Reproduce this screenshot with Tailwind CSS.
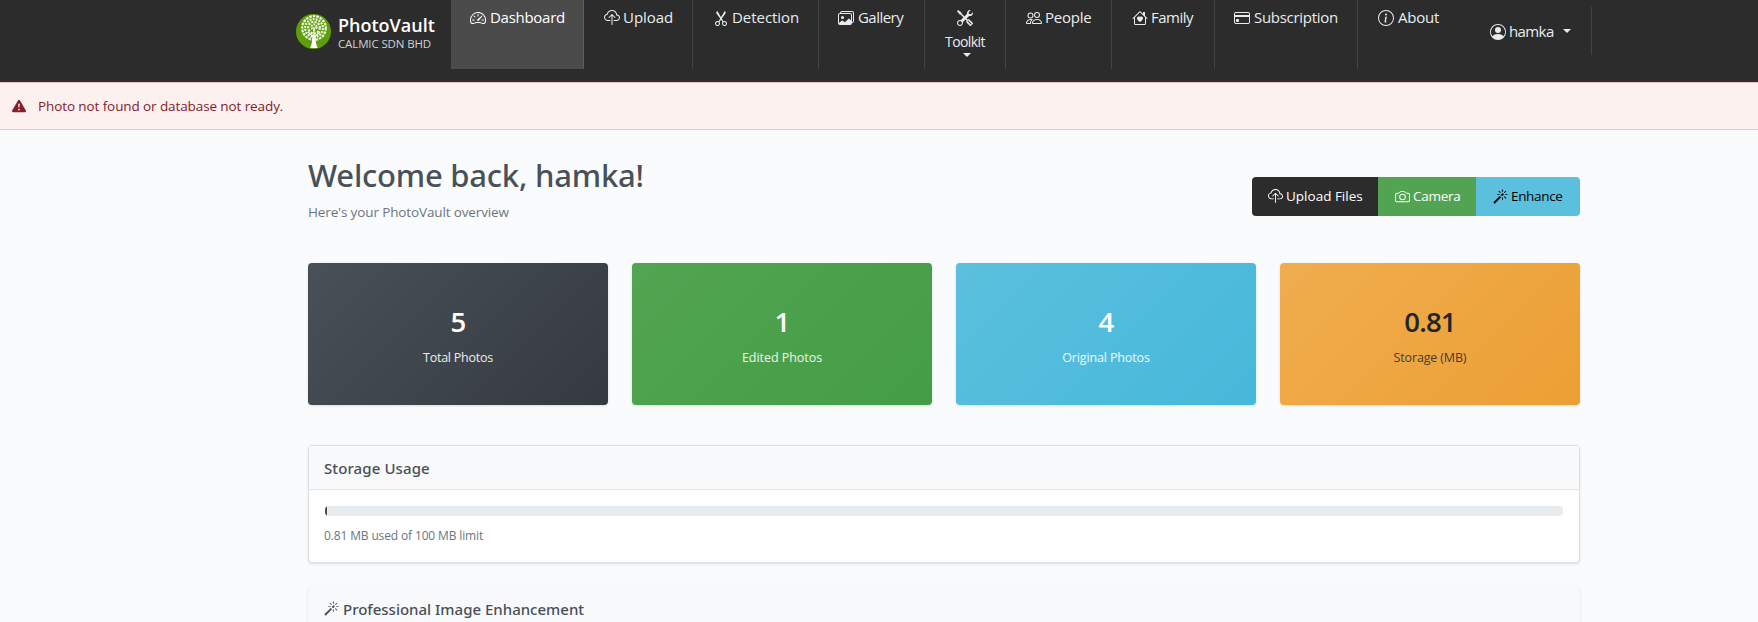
<!DOCTYPE html>
<html lang="en">
<head>
<meta charset="utf-8">
<title>PhotoVault</title>
<script src="https://cdn.jsdelivr.net/npm/@tailwindcss/browser@4"></script>
</head>
<body class="h-[622px] overflow-hidden bg-[#fafbfd] font-['Open_Sans','Noto_Sans',sans-serif] text-[#495057]">
<svg class="hidden">
  <symbol id="cloud" viewBox="0 0 16 16"><path fill-rule="evenodd" d="M4.406 1.342A5.53 5.53 0 0 1 8 0c2.69 0 4.923 2 5.166 4.579C14.758 4.804 16 6.137 16 7.773 16 9.569 14.502 11 12.687 11H10a.5.5 0 0 1 0-1h2.688C13.979 10 15 8.988 15 7.773c0-1.216-1.02-2.228-2.313-2.228h-.5v-.5C12.188 2.825 10.328 1 8 1a4.53 4.53 0 0 0-2.941 1.1c-.757.652-1.153 1.438-1.153 2.055v.448l-.445.049C2.064 4.805 1 5.952 1 7.318 1 8.785 2.23 10 3.781 10H6a.5.5 0 0 1 0 1H3.781C1.708 11 0 9.366 0 7.318c0-1.763 1.266-3.223 2.942-3.593.143-.863.698-1.723 1.464-2.383"/><path fill-rule="evenodd" d="M7.646 4.146a.5.5 0 0 1 .708 0l3 3a.5.5 0 0 1-.708.708L8.5 5.707V14.5a.5.5 0 0 1-1 0V5.707L5.354 7.854a.5.5 0 1 1-.708-.708z"/></symbol>
  <symbol id="magic" viewBox="0 0 16 16"><path d="M9.5 2.672a.5.5 0 1 0 1 0V.843a.5.5 0 0 0-1 0zm4.5.035A.5.5 0 0 0 13.293 2L12 3.293a.5.5 0 1 0 .707.707zM7.293 4A.5.5 0 1 0 8 3.293L6.707 2A.5.5 0 0 0 6 2.707zm-.621 2.5a.5.5 0 1 0 0-1H4.843a.5.5 0 1 0 0 1zm8.485 0a.5.5 0 1 0 0-1h-1.829a.5.5 0 0 0 0 1zM13.293 10A.5.5 0 1 0 14 9.293L12.707 8a.5.5 0 1 0-.707.707zM9.5 11.157a.5.5 0 0 0 1 0V9.328a.5.5 0 0 0-1 0zm1.854-5.097a.5.5 0 0 0 0-.706l-.708-.708a.5.5 0 0 0-.707 0L8.646 5.94a.5.5 0 0 0 0 .707l.708.708a.5.5 0 0 0 .707 0l1.293-1.293Zm-3 3a.5.5 0 0 0 0-.706l-.708-.708a.5.5 0 0 0-.707 0L.646 13.94a.5.5 0 0 0 0 .707l.707.707a.5.5 0 0 0 .707 0z"/></symbol>
</svg>

<header class="flex h-[82px] items-start bg-[#2c2c2c] pl-[296px] text-[15px] leading-6 text-[#e9ecef]">
  <a class="flex w-[155px] shrink-0 gap-[7px] pt-3.5">
    <svg class="size-[35px] shrink-0" viewBox="0 0 35 35">
      <circle cx="17.5" cy="17.5" r="17.5" fill="#5f9e0b"/>
      <g fill="none" stroke="#eef4e4">
        <circle cx="18" cy="14" r="11.8" stroke-width="2.2" stroke-dasharray="2.6 1"/>
        <circle cx="18" cy="14" r="8.9" stroke-width="2.2" stroke-dasharray="2 1.1"/>
        <circle cx="18" cy="13.6" r="5.8" stroke-width="2.3" stroke-dasharray="2.2 1.2"/>
        <circle cx="18" cy="13" r="2.5" stroke-width="2.2" stroke-dasharray="1.7 1"/>
        <path d="M18 23V13M18 23l-6-5M18 23l6-5" stroke-width="1.5"/>
      </g>
      <path fill="#fff" d="M16.300 21h3.400c-.3 4 0 9.500 2 13h-7.600c2-3.500 2.500-9 2.200-13"/>
    </svg>
    <span class="flex flex-col">
      <span class="text-lg leading-[22px] font-semibold text-white">PhotoVault</span>
      <span class="text-[11.5px] leading-[15px] tracking-[-0.13px] whitespace-nowrap text-[#d0d2d4]">CALMIC SDN BHD</span>
    </span>
  </a>
  <nav class="flex h-[69px]">
    <a class="flex w-[133px] gap-1 border-r border-[#5e5e5e] bg-[#4b4b4b] pt-[5px] pl-[19px] text-white">
      <svg class="mt-[5px] size-4 shrink-0 fill-current" viewBox="0 0 16 16"><path d="M8 4a.5.5 0 0 1 .5.5V6a.5.5 0 0 1-1 0V4.500A.5.5 0 0 1 8 4M3.732 5.732a.5.5 0 0 1 .707 0l.915.914a.5.5 0 1 1-.708.708l-.914-.915a.5.5 0 0 1 0-.707M2 10a.5.5 0 0 1 .5-.5h1.586a.5.5 0 0 1 0 1H2.500A.5.5 0 0 1 2 10m9.500 0a.5.5 0 0 1 .5-.5h1.500a.5.5 0 0 1 0 1H12a.5.5 0 0 1-.5-.5m.754-4.246a.39.39 0 0 0-.527-.02L7.547 9.310a.91.91 0 1 0 1.302 1.258l3.434-4.297a.39.39 0 0 0-.029-.518z"/><path fill-rule="evenodd" d="M0 10a8 8 0 1 1 15.547 2.661c-.442 1.253-1.845 1.602-2.932 1.250C11.309 13.488 9.475 13 8 13c-1.474 0-3.310.488-4.615.911-1.087.352-2.490.003-2.932-1.250A8 8 0 0 1 0 10m8-7a7 7 0 0 0-6.603 9.329c.203.575.923.876 1.680.63C4.397 12.533 6.358 12 8 12s3.604.532 4.923.96c.757.245 1.477-.056 1.680-.631A7 7 0 0 0 8 3"/></svg>
      <span class="tracking-[-0.28px]">Dashboard</span>
    </a>
    <a class="flex w-[109px] gap-[3px] border-r border-[#434343] pt-[5px] pl-5">
      <svg class="mt-[5px] size-4 shrink-0 fill-current"><use href="#cloud"/></svg>
      <span class="tracking-[-0.05px]">Upload</span>
    </a>
    <a class="flex w-[126px] gap-[3px] border-r border-[#434343] pt-[5px] pl-5">
      <svg class="mt-[5px] size-4 shrink-0 fill-current" viewBox="0 0 16 16"><path d="M3.500 3.500c-.614-.884-.074-1.962.858-2.500L8 7.226 11.642 1c.932.538 1.472 1.616.858 2.500L8.810 8.610l1.556 2.661a2.500 2.500 0 1 1-.794.637L8 9.730l-1.572 2.177a2.500 2.500 0 1 1-.794-.637L7.190 8.610zm2.500 10a1.500 1.500 0 1 0-3 0 1.500 1.500 0 0 0 3 0m7 0a1.500 1.500 0 1 0-3 0 1.500 1.500 0 0 0 3 0"/></svg>
      <span class="tracking-[-0.05px]">Detection</span>
    </a>
    <a class="flex w-[106px] gap-1 border-r border-[#434343] pt-[5px] pl-[19px]">
      <svg class="mt-[5px] size-4 shrink-0 fill-current" viewBox="0 0 16 16"><path d="M4.502 9a1.500 1.500 0 1 0 0-3 1.500 1.500 0 0 0 0 3"/><path d="M14.002 13a2 2 0 0 1-2 2h-10a2 2 0 0 1-2-2V5A2 2 0 0 1 2 3a2 2 0 0 1 2-2h10a2 2 0 0 1 2 2v8a2 2 0 0 1-1.998 2M14 2H4a1 1 0 0 0-1 1h9.002a2 2 0 0 1 2 2v7A1 1 0 0 0 15 11V3a1 1 0 0 0-1-1M2.002 4a1 1 0 0 0-1 1v8l2.646-2.354a.5.5 0 0 1 .63-.062l2.660 1.773 3.710-3.710a.5.5 0 0 1 .577-.094l1.777 1.947V5a1 1 0 0 0-1-1z"/></svg>
      <span class="tracking-[-0.54px]">Gallery</span>
    </a>
    <a class="flex w-[81px] flex-col items-center border-r border-[#434343] pt-2.5">
      <svg class="size-4 shrink-0 fill-current" viewBox="0 0 16 16"><path fill-rule="evenodd" d="M1 0 0 1l2.200 3.081a1 1 0 0 0 .815.419h.07a1 1 0 0 1 .708.293l2.675 2.675-2.617 2.654A3.003 3.003 0 0 0 0 13a3 3 0 1 0 5.878-.851l2.654-2.617.968.968-.305.914a1 1 0 0 0 .242 1.023l3.270 3.270a.997.997 0 0 0 1.414 0l1.586-1.586a.997.997 0 0 0 0-1.414l-3.270-3.270a1 1 0 0 0-1.023-.242L10.500 9.500l-.96-.96 2.680-2.643A3.005 3.005 0 0 0 16 3q0-.405-.102-.777l-2.140 2.141L12 4l-.364-1.757L13.777.102a3 3 0 0 0-3.675 3.680L7.462 6.460 4.793 3.793a1 1 0 0 1-.293-.707v-.071a1 1 0 0 0-.419-.814zm9.646 10.646a.5.5 0 0 1 .708 0l2.914 2.915a.5.5 0 0 1-.707.707l-2.915-2.914a.5.5 0 0 1 0-.708M3 11l.471.242.529.026.287.445.445.287.026.529L5 13l-.242.471-.026.529-.445.287-.287.445-.529.026L3 15l-.471-.242L2 14.732l-.287-.445L1.268 14l-.026-.529L1 13l.242-.471.026-.529.445-.287.287-.445.529-.026z"/></svg>
      <span class="mt-1 h-[23px] text-sm leading-6 tracking-[-0.6px]">Toolkit</span>
      <span class="ml-1 border-x-4 border-t-4 border-x-transparent border-t-current"></span>
    </a>
    <a class="flex w-[106px] gap-[3px] border-r border-[#434343] pt-[5px] pl-5">
      <svg class="mt-[5px] size-4 shrink-0 fill-current" viewBox="0 0 16 16"><path d="M15 14s1 0 1-1-1-4-5-4-5 3-5 4 1 1 1 1zm-7.978-1L7 12.996c.001-.264.167-1.030.76-1.720C8.312 10.629 9.282 10 11 10c1.717 0 2.687.63 3.240 1.276.593.69.758 1.457.76 1.720l-.008.002-.014.002zM11 7a2 2 0 1 0 0-4 2 2 0 0 0 0 4m3-2a3 3 0 1 1-6 0 3 3 0 0 1 6 0M6.936 9.280a6 6 0 0 0-1.230-.247A7 7 0 0 0 5 9c-4 0-5 3-5 4q0 1 1 1h4.216A2.240 2.240 0 0 1 5 13c0-1.010.377-2.042 1.090-2.904.243-.294.526-.569.846-.816M4.920 10A5.500 5.500 0 0 0 4 13H1c0-.26.164-1.030.76-1.724.545-.636 1.492-1.256 3.160-1.275ZM1.500 5.500a3 3 0 1 1 6 0 3 3 0 0 1-6 0m3-2a2 2 0 1 0 0 4 2 2 0 0 0 0-4"/></svg>
      <span class="tracking-[-0.24px]">People</span>
    </a>
    <a class="flex w-[103px] gap-[3px] border-r border-[#434343] pt-[5px] pl-5">
      <svg class="mt-[5px] size-4 shrink-0 fill-current" viewBox="0 0 16 16"><path d="M8 6.982C9.664 5.309 13.825 8.236 8 12 2.175 8.236 6.336 5.309 8 6.982"/><path d="M8.707 1.500a1 1 0 0 0-1.414 0L.646 8.146a.5.5 0 0 0 .708.707L2 8.207V13.500A1.500 1.500 0 0 0 3.500 15h9a1.500 1.500 0 0 0 1.500-1.500V8.207l.646.646a.5.5 0 0 0 .708-.707L13 5.793V2.500a.5.5 0 0 0-.5-.5h-1a.5.5 0 0 0-.5.5v1.293zM13 7.207V13.500a.5.5 0 0 1-.5.5h-9a.5.5 0 0 1-.5-.5V7.207l5-5z"/></svg>
      <span class="tracking-[-0.51px]">Family</span>
    </a>
    <a class="flex w-[143px] gap-1 border-r border-[#434343] pt-[5px] pl-[19px]">
      <svg class="mt-[5px] size-4 shrink-0 fill-current" viewBox="0 0 16 16"><path d="M0 4a2 2 0 0 1 2-2h12a2 2 0 0 1 2 2v8a2 2 0 0 1-2 2H2a2 2 0 0 1-2-2zm2-1a1 1 0 0 0-1 1v1h14V4a1 1 0 0 0-1-1zm13 4H1v5a1 1 0 0 0 1 1h12a1 1 0 0 0 1-1z"/><path d="M2 10a1 1 0 0 1 1-1h1a1 1 0 0 1 1 1v1a1 1 0 0 1-1 1H3a1 1 0 0 1-1-1z"/></svg>
      <span class="tracking-[-0.29px]">Subscription</span>
    </a>
    <a class="flex w-[101px] gap-1 pt-[5px] pl-5">
      <svg class="mt-[5px] size-4 shrink-0 fill-current" viewBox="0 0 16 16"><path d="M8 15A7 7 0 1 1 8 1a7 7 0 0 1 0 14m0 1A8 8 0 1 0 8 0a8 8 0 0 0 0 16"/><path d="m8.930 6.588-2.290.287-.082.38.45.083c.294.07.352.176.288.469l-.738 3.468c-.194.897.105 1.319.808 1.319.545 0 1.178-.252 1.465-.598l.088-.416c-.2.176-.492.246-.686.246-.275 0-.375-.193-.304-.533zM9 4.500a1 1 0 1 1-2 0 1 1 0 0 1 2 0"/></svg>
      <span class="tracking-[-0.22px]">About</span>
    </a>
  </nav>
  <a class="mt-[7px] ml-[11px] flex h-12 w-[122px] gap-[3px] border-r border-[#434343] pt-3 pl-5">
    <svg class="mt-[5px] size-4 shrink-0 fill-current" viewBox="0 0 16 16"><path d="M11 6a3 3 0 1 1-6 0 3 3 0 0 1 6 0"/><path fill-rule="evenodd" d="M0 8a8 8 0 1 1 16 0A8 8 0 0 1 0 8m8-7a7 7 0 0 0-5.468 11.370C3.242 11.226 4.805 10 8 10s4.757 1.225 5.468 2.370A7 7 0 0 0 8 1"/></svg>
    <span class="tracking-[-0.6px]">hamka</span>
    <span class="mt-2.5 ml-1.5 h-1 border-x-4 border-t-4 border-x-transparent border-t-current"></span>
  </a>
</header>

<div class="flex h-12 items-center gap-3 border-y border-[#f5c2c7] bg-[#fdf1f0] pl-3 text-[13.5px] text-[#842029]">
  <svg class="size-3.5 fill-current" viewBox="0 0 16 16"><path d="M8.982 1.566a1.130 1.130 0 0 0-1.960 0L.165 13.233c-.457.778.091 1.767.98 1.767h13.713c.889 0 1.438-.99.98-1.767zM8 5c.535 0 .954.462.9.995l-.35 3.507a.552.552 0 0 1-1.100 0L7.100 5.995A.905.905 0 0 1 8 5m.002 6a1 1 0 1 1 0 2 1 1 0 0 1 0-2"/></svg>
  <span class="tracking-[-0.1px]">Photo not found or database not ready.</span>
</div>

<main class="ml-[308px] w-[1272px] whitespace-nowrap">
  <div class="flex h-[133px] justify-between">
    <div>
      <h1 class="pt-[25px] font-['Noto_Sans',sans-serif] text-[31px] leading-10 font-medium tracking-[-0.22px]">Welcome back, hamka!</h1>
      <p class="pt-[7px] text-[13.5px] leading-5 tracking-[-0.13px] text-[#6c757d]">Here's your PhotoVault overview</p>
    </div>
    <div class="mt-[47px] flex h-[39px] overflow-hidden rounded text-[13.5px] leading-[39px] text-white">
      <a class="flex w-[126px] gap-[3px] bg-[#2c2c2c] pl-4"><svg class="mt-3 size-[15px] fill-current"><use href="#cloud"/></svg><span>Upload Files</span></a>
      <a class="flex w-[98px] gap-[3px] bg-[#52a452] pl-[17px]"><svg class="mt-3 size-[15px] fill-current" viewBox="0 0 16 16"><path d="M15 12a1 1 0 0 1-1 1H2a1 1 0 0 1-1-1V6a1 1 0 0 1 1-1h1.172a3 3 0 0 0 2.120-.879l.83-.828A1 1 0 0 1 6.827 3h2.344a1 1 0 0 1 .707.293l.828.828A3 3 0 0 0 12.828 5H14a1 1 0 0 1 1 1zM2 4a2 2 0 0 0-2 2v6a2 2 0 0 0 2 2h12a2 2 0 0 0 2-2V6a2 2 0 0 0-2-2h-1.172a2 2 0 0 1-1.414-.586l-.828-.828A2 2 0 0 0 9.172 2H6.828a2 2 0 0 0-1.414.586l-.828.828A2 2 0 0 1 3.172 4z"/><path d="M8 11a2.500 2.500 0 1 1 0-5 2.500 2.500 0 0 1 0 5m0 1a3.500 3.500 0 1 0 0-7 3.500 3.500 0 0 0 0 7M3 6.500a.5.5 0 1 1-1 0 .5.5 0 0 1 1 0"/></svg><span class="tracking-[-0.26px]">Camera</span></a>
      <a class="flex w-[104px] gap-[3px] bg-[#5bc0de] pl-[17px] text-black"><svg class="mt-3 size-[15px] fill-current"><use href="#magic"/></svg><span class="tracking-[-0.33px]">Enhance</span></a>
    </div>
  </div>

  <div class="grid grid-cols-4 gap-6 text-center text-white">
    <div class="h-[142px] rounded bg-linear-135 from-[#495057] to-[#343a40] pt-10 shadow-sm">
      <div class="text-[27.5px] leading-[38px] font-semibold tracking-[-0.8px]">5</div>
      <div class="pt-[7px] text-[12.5px] leading-5 tracking-[-0.25px] text-white/90">Total Photos</div>
    </div>
    <div class="h-[142px] rounded bg-linear-135 from-[#52a552] to-[#449d44] pt-10 shadow-sm">
      <div class="text-[27.5px] leading-[38px] font-semibold tracking-[-0.8px]">1</div>
      <div class="pt-[7px] text-[12.5px] leading-5 tracking-[-0.05px] text-white/90">Edited Photos</div>
    </div>
    <div class="h-[142px] rounded bg-linear-135 from-[#5bc0de] to-[#46b8da] pt-10 shadow-sm">
      <div class="text-[27.5px] leading-[38px] font-semibold tracking-[-0.8px]">4</div>
      <div class="pt-[7px] text-[12.5px] leading-5 tracking-[-0.14px] text-white/90">Original Photos</div>
    </div>
    <div class="h-[142px] rounded bg-linear-135 from-[#f0ad4e] to-[#ec9f33] pt-10 text-[#212529] shadow-sm">
      <div class="text-[27.5px] leading-[38px] font-semibold tracking-[-0.8px]">0.81</div>
      <div class="pt-[7px] text-[12.5px] leading-5 tracking-[-0.15px] text-[#212529]/85">Storage (MB)</div>
    </div>
  </div>

  <section class="mt-10 h-[118px] overflow-hidden rounded border border-[#dee2e6] bg-white shadow-sm">
    <h2 class="h-11 border-b border-[#dee2e6] bg-[#f8f9fb] pl-[15px] font-['Noto_Sans',sans-serif] text-[15px] leading-[45px] font-medium tracking-[0.1px]">Storage Usage</h2>
    <div class="px-4 pt-4">
      <div class="flex h-2.5 overflow-hidden rounded bg-[#e9ecef]"><div class="h-full w-0.5 bg-[#495057]"></div></div>
      <p class="-ml-px pt-3 text-xs leading-4 tracking-[-0.14px] text-[#6c757d]">0.81 MB used of 100 MB limit</p>
    </div>
  </section>

  <section class="mt-6 flex h-[60px] gap-1 rounded bg-[#f8f9fb] pt-3.5 pl-4 shadow-sm">
    <svg class="size-[15px] fill-current"><use href="#magic"/></svg>
    <h2 class="font-['Noto_Sans',sans-serif] text-[15px] leading-[17px] font-medium">Professional Image Enhancement</h2>
  </section>
</main>
</body>
</html>
